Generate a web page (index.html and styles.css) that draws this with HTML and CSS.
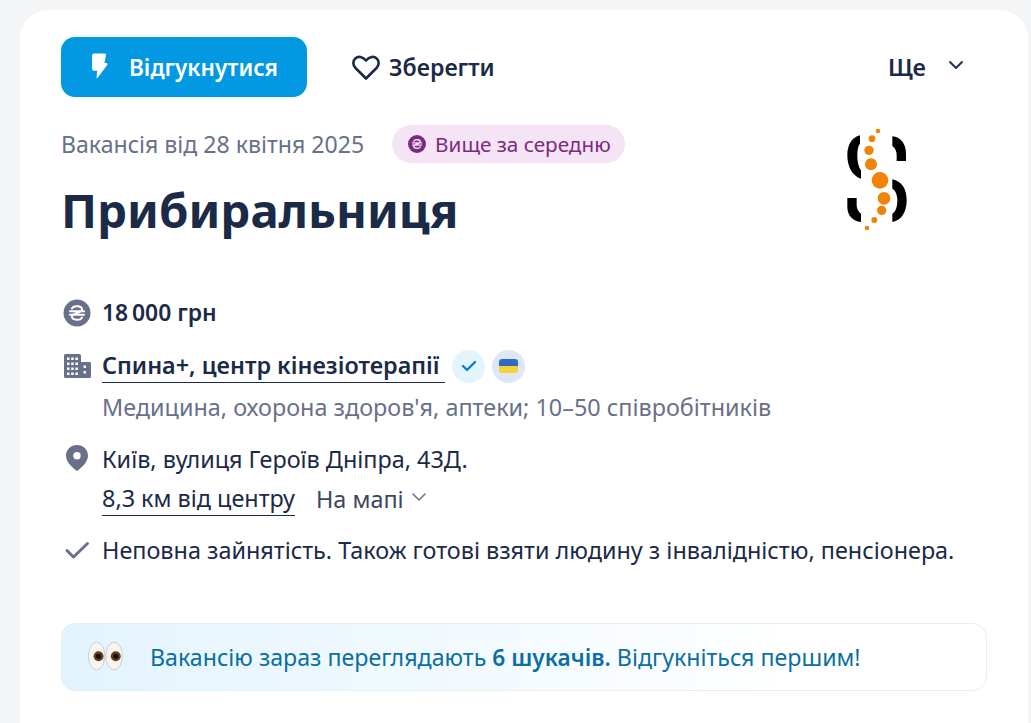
FILE: index.html
```html
<!doctype html>
<html>

<head>
    <title>Прибиральниця</title>
    <meta charset="utf-8">
    <link rel="stylesheet" href="styles.css">
</head>

<body>
    <main class="card">
        <div class="actions">
            <a class="apply">
                <svg class="apply-icon" width="18" height="28" viewBox="35 35 55 85">
                    <path fill="#fff" d="M44 39H76Q82 39 81 45L76 68H82Q87 68 85 74L56 113Q52 118 52 112L54 92H46Q38 92 38 84V46Q38 39 44 39Z"/>
                </svg>
                <span>Відгукнутися</span>
            </a>
            <a class="save">
                <svg width="30" height="28" viewBox="0 0 30 28">
                    <path fill="none" stroke="#1b2a47" stroke-width="2.600" stroke-linejoin="round" d="M15 25.500 4.500 15C1.500 12 1.800 7.800 4.300 5.500 7 3 11.500 3.300 15 7.500 18.500 3.300 23 3 25.700 5.500 28.200 7.800 28.500 12 25.500 15z"/>
                </svg>
                <span>Зберегти</span>
            </a>
            <a class="more">
                <span>Ще</span>
                <svg width="16" height="10" viewBox="0 0 16 10">
                    <path fill="none" stroke="#1b2a47" stroke-width="1.800" stroke-linecap="round" stroke-linejoin="round" d="M2 2l6 6 6-6"/>
                </svg>
            </a>
        </div>

        <div class="head">
            <div class="head-text">
                <div class="meta">
                    <span class="date">Вакансія від 28 квітня 2025</span>
                    <span class="pill">
                        <svg width="18" height="18" viewBox="0 0 28 28">
                            <circle cx="14" cy="14" r="14" fill="#7b2a7e"/>
                            <path fill="none" stroke="#f5e3f6" stroke-width="2.200" stroke-linecap="round" d="M9 9.500C10 6.500 19 6.300 19 10.500 19 12 17 13 14 14 11 15 9 16 9 17.500 9 21.700 18 21.500 19 18.500M7 12.300H21M7 15.700H21"/>
                        </svg>
                        Вище за середню
                    </span>
                </div>
                <h1>Прибиральниця</h1>
            </div>
            <svg class="logo" width="75" height="115" viewBox="0 0 225 345">
                <g fill="#000">
                    <path d="M60 40C35 45 22 70 22 100 22 135 38 163 63 170V145C55 135 52 118 52 100 52 85 54 72 60 65Z"/>
                    <path d="M157 43C182 45 198 65 198 95V117H170V100C170 88 166 78 157 72Z"/>
                    <path d="M157 172C185 178 200 200 200 235 200 270 185 295 157 300V275C167 270 172 255 172 235 172 220 167 205 157 200Z"/>
                    <path d="M22 228H50V250C50 260 55 270 63 275V300C38 297 22 280 22 255Z"/>
                </g>
                <g fill="#f08408">
                    <circle cx="114" cy="27" r="7"/>
                    <circle cx="96" cy="50" r="10"/>
                    <circle cx="87" cy="85" r="14"/>
                    <circle cx="93" cy="127" r="18"/>
                    <circle cx="120" cy="175" r="25"/>
                    <circle cx="132" cy="229" r="19"/>
                    <circle cx="125" cy="265" r="14"/>
                    <circle cx="103" cy="294" r="9"/>
                    <circle cx="81" cy="318" r="7"/>
                </g>
            </svg>
        </div>

        <ul class="facts">
            <li class="fact">
                <svg class="fact-icon" width="30" height="28" viewBox="0 0 30 28">
                    <circle cx="16" cy="14" r="13.500" fill="#68708a"/>
                    <path fill="none" stroke="#fff" stroke-width="2" stroke-linecap="round" d="M11 9.500C12 6.500 21 6.300 21 10.500 21 12 19 13 16 14 13 15 11 16 11 17.500 11 21.700 20 21.500 21 18.500M9 12.300H23M9 15.700H23"/>
                </svg>
                <b class="salary">18&#8239;000 грн</b>
            </li>
            <li class="fact company">
                <svg class="fact-icon" width="30" height="28" viewBox="0 0 30 28">
                    <path fill="#68708a" fill-rule="evenodd" d="M4.500 1H18.500A1.500 1.500 0 0 1 20 2.500V9H28.500A1.500 1.500 0 0 1 30 10.500V23.500A1.500 1.500 0 0 1 28.500 25H4.500A1.500 1.500 0 0 1 3 23.500V2.500A1.500 1.500 0 0 1 4.500 1ZM6 4.500V7H8.500V4.500ZM10.200 4.500V7H12.700V4.500ZM14.400 4.500V7H16.900V4.500ZM6 9.500V12H8.500V9.500ZM10.200 9.500V12H12.700V9.500ZM14.400 9.500V12H16.900V9.500ZM6 14.500V17H8.500V14.500ZM10.200 14.500V17H12.700V14.500ZM14.400 14.500V17H16.900V14.500ZM6 19.500V22H8.500V19.500ZM10.200 19.500V22H12.700V19.500ZM14.400 19.500V22H16.900V19.500ZM22.500 12.500V15H25V12.500ZM22.500 18V20.500H25V18Z"/>
                </svg>
                <div>
                    <div class="company-row">
                        <a class="company-name">Спина+, центр кінезіотерапії</a>
                        <span class="badge badge-check">
                            <svg width="16" height="12" viewBox="0 0 16 12">
                                <path fill="none" stroke="#0b7fc4" stroke-width="2.400" stroke-linecap="round" stroke-linejoin="round" d="M2 6l4 4 8-8"/>
                            </svg>
                        </span>
                        <span class="badge badge-flag"><i class="flag"></i></span>
                    </div>
                    <div class="industry">Медицина, охорона здоров'я, аптеки; 10–50 співробітників</div>
                </div>
            </li>
            <li class="fact address">
                <svg class="fact-icon" width="30" height="28" viewBox="0 0 30 28">
                    <path fill="#68708a" fill-rule="evenodd" d="M16 1C22.200 1 27 5.700 27 11.700 27 18 20.500 23.500 16.800 26.500 16.300 26.900 15.700 26.900 15.200 26.500 11.500 23.500 5 18 5 11.700 5 5.700 9.800 1 16 1ZM16 8A3.700 3.700 0 1 0 16 15.400 3.700 3.700 0 0 0 16 8Z"/>
                </svg>
                <div>
                    <div class="street">Київ, вулиця Героїв Дніпра, 43Д.</div>
                    <div class="distance-row">
                        <a class="distance">8,3 км від центру</a>
                        <a class="map-link">На мапі
                            <svg width="16" height="10" viewBox="0 0 16 10">
                                <path fill="none" stroke="#68708a" stroke-width="1.500" stroke-linecap="round" stroke-linejoin="round" d="M2 2l6 6 6-6"/>
                            </svg>
                        </a>
                    </div>
                </div>
            </li>
            <li class="fact terms">
                <svg class="fact-icon" width="30" height="28" viewBox="0 0 30 28">
                    <path fill="none" stroke="#68708a" stroke-width="3" stroke-linecap="round" stroke-linejoin="round" d="M6 14.500L12.500 21 26.500 7.500"/>
                </svg>
                <span>Неповна зайнятість. Також готові взяти людину з інвалідністю, пенсіонера.</span>
            </li>
        </ul>

        <div class="notice">
            <svg class="eyes" width="39" height="32" viewBox="20 15 118 96">
                <ellipse cx="52" cy="63" rx="25" ry="42" fill="#f6f4f2" stroke="#cfcdcc" stroke-width="3"/>
                <ellipse cx="105" cy="63" rx="25" ry="42" fill="#f6f4f2" stroke="#cfcdcc" stroke-width="3"/>
                <circle cx="58" cy="64" r="15" fill="#6b3d12"/>
                <circle cx="110" cy="64" r="15" fill="#6b3d12"/>
                <circle cx="58" cy="64" r="8" fill="#111"/>
                <circle cx="110" cy="64" r="8" fill="#111"/>
            </svg>
            <span>Вакансію зараз переглядають <b>6 шукачів.</b> Відгукніться першим!</span>
        </div>
    </main>
</body>

</html>
```

FILE: styles.css
```css
* {
    box-sizing: border-box;
}

html,
body {
    height: 100%;
}

body {
    margin: 0;
    padding: 10px 3px 0 20px;
    background: #f3f5f7;
    color: #1b2a47;
    font-family: "Noto Sans", "Open Sans", sans-serif;
    font-size: 23.4px;
    overflow: hidden;
}

.card {
    background: #fff;
    border-radius: 28px 28px 0 0;
    padding: 27px 41px 0;
    min-height: 713px;
}

.actions {
    display: flex;
    align-items: center;
    height: 60px;
}

.apply {
    display: flex;
    align-items: center;
    width: 246px;
    height: 60px;
    padding-left: 30px;
    background: #0398e2;
    border-radius: 14px;
    color: #fff;
    font-size: 22.600px;
    font-weight: 600;
}

.apply-icon {
    margin-right: 20px;
    margin-top: -2px;
}

.save {
    display: flex;
    align-items: center;
    gap: 8px;
    margin-left: 44px;
    font-size: 23.100px;
    font-weight: 600;
}

.more {
    display: flex;
    align-items: center;
    gap: 22px;
    margin-left: auto;
    margin-right: 23px;
    font-weight: 600;
}

.more svg {
    margin-top: -4px;
}

.head {
    display: flex;
    justify-content: space-between;
    margin-top: 25px;
}

.meta {
    display: flex;
    align-items: center;
    gap: 28px;
    height: 38px;
    margin: 3px 0 17px;
}

.date {
    color: #68708a;
    font-size: 23.100px;
}

.pill {
    display: flex;
    align-items: center;
    gap: 9px;
    height: 38px;
    padding: 0 14px 0 16px;
    background: #f5e3f6;
    border-radius: 19px;
    color: #7b2a7e;
    font-size: 20.700px;
}

h1 {
    margin: 0;
    font-size: 47.300px;
    line-height: 60px;
    font-weight: 700;
}

.logo {
    margin-right: 72px;
}

.facts {
    list-style: none;
    margin: 57px 0 0;
    padding: 0;
}

.fact {
    display: flex;
    gap: 11px;
}

.fact-icon {
    flex: none;
    margin-top: 2px;
}

.salary {
    font-size: 22.900px;
    font-weight: 600;
    line-height: 32px;
}

.company {
    margin-top: 19px;
}

.company .fact-icon {
    margin-top: 5px;
}

.company-row {
    display: flex;
    align-items: center;
    height: 36px;
}

.company-name {
    border-bottom: 1px solid #1b2a47;
    font-weight: 600;
    line-height: 33px;
    padding-right: 6px;
}

.badge {
    display: flex;
    align-items: center;
    justify-content: center;
    width: 33px;
    height: 33px;
    border-radius: 50%;
}

.badge-check {
    margin-left: 7px;
    background: #e3f4fd;
}

.badge-flag {
    margin-left: 7px;
    background: #dfe6f5;
}

.flag {
    display: block;
    width: 19px;
    height: 14.500px;
    border-radius: 3px;
    background: linear-gradient(#2d6bc4 50%, #f5d236 50%);
}

.industry {
    margin-top: 7px;
    color: #68708a;
    line-height: 32px;
}

.address {
    margin-top: 21px;
}

.address .fact-icon {
    margin-top: 0;
}

.street {
    line-height: 30px;
}

.distance-row {
    display: flex;
    align-items: center;
    gap: 21px;
    margin-top: 8px;
}

.distance {
    border-bottom: 1px solid #1b2a47;
    line-height: 33px;
}

.map-link {
    display: flex;
    align-items: center;
    gap: 7px;
    color: #3d4660;
}

.map-link svg {
    margin-top: -5px;
}

.terms {
    margin-top: 18px;
}

.notice {
    display: flex;
    align-items: center;
    height: 68px;
    margin-top: 57px;
    padding-left: 24px;
    border: 1px solid #e6eff6;
    border-radius: 14px;
    background: linear-gradient(90deg, #e3f4fd, #fff 80%);
    color: #0b6fa4;
    font-size: 23.200px;
}

.eyes {
    margin-right: 25px;
    margin-top: -2px;
}

.notice b {
    font-size: 22.700px;
    font-weight: 600;
}
```
